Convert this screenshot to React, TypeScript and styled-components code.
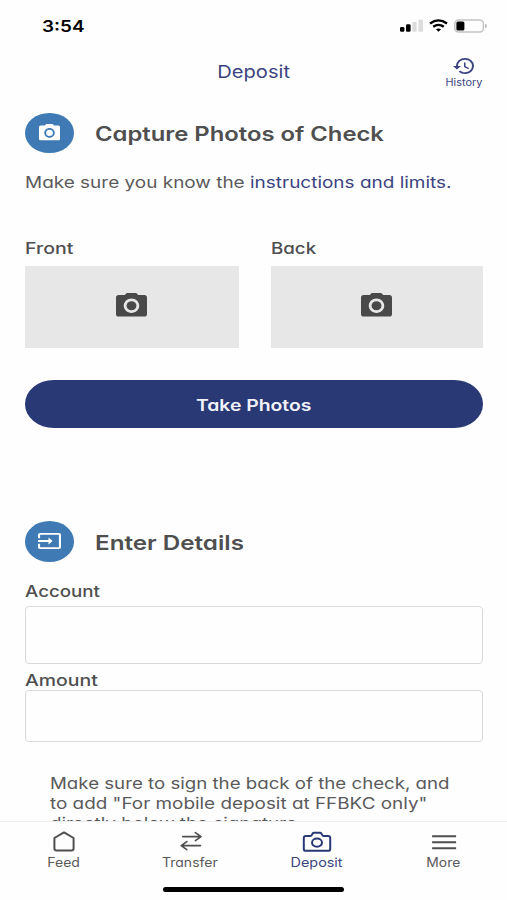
import React from "react";
import styled, { createGlobalStyle } from "styled-components";

const ink = "#4f4f50";
const softInk = "#5a5a5b";
const navy = "#293975";
const softNavy = "#3b4380";
const blue = "#3f7ab5";

const GlobalStyle = createGlobalStyle`
  *, *::before, *::after { box-sizing: border-box; }
  body {
    margin: 0;
    background: #fefefe;
    color: ${ink};
    font-family: Inter, "Open Sans", sans-serif;
    font-feature-settings: "cv11";
  }
`;

const Screen = styled.div`
  display: flex;
  flex-direction: column;
  width: 507px;
  height: 900px;
  overflow: hidden;
`;

const Wide = styled.span<{
  $size: number;
  $weight?: number;
  $stretch?: number;
  $origin?: string;
  $color?: string;
}>`
  display: block;
  width: max-content;
  white-space: nowrap;
  font-size: ${(p) => p.$size}px;
  line-height: 20px;
  font-weight: ${(p) => p.$weight ?? 400};
  color: ${(p) => p.$color ?? "inherit"};
  transform: scaleX(${(p) => p.$stretch ?? 1.182});
  transform-origin: ${(p) => p.$origin ?? "left"} center;
`;

const StatusBar = styled.div`
  flex: none;
  display: flex;
  justify-content: space-between;
  align-items: center;
  height: 51px;
  padding: 0 20px 0 42px;
`;

const StatusIcons = styled.div`
  display: flex;
  align-items: center;
  gap: 6px;
`;

const Header = styled.header`
  flex: none;
  display: grid;
  grid-template-columns: 87px 1fr 87px;
  align-items: center;
  justify-items: center;
  height: 41px;
`;

const HistoryButton = styled.button`
  display: flex;
  flex-direction: column;
  align-items: center;
  padding: 5px 0 0;
  border: 0;
  background: none;
  color: ${softNavy};
  font: inherit;
  font-feature-settings: inherit;
  line-height: 18px;

  ${Wide} {
    line-height: 17px;
  }
`;

const Content = styled.main`
  flex: 1;
  min-height: 0;
  overflow: hidden;
  padding: 20.8px 24px 0 25px;
`;

const SectionHead = styled.div`
  display: flex;
  align-items: center;
  gap: 20.5px;
  height: 40.5px;

  > ${Wide} {
    padding-top: 2px;
  }
`;

const Badge = styled.div`
  display: grid;
  place-items: center;
  width: 49px;
  height: 40.5px;
  padding: 0 1px 1.5px 0;
  border-radius: 50%;
  background: ${blue};
  color: #fff;
`;

const Hint = styled.p`
  margin: 19.2px 0 0;
  color: ${softInk};
`;

const Link = styled.a`
  color: ${softNavy};
`;

const Photos = styled.div`
  display: grid;
  grid-template-columns: 214.4px 212px;
  justify-content: space-between;
  margin-top: 45.5px;
`;

const PhotoBox = styled.div`
  display: grid;
  place-items: center;
  height: 82px;
  margin-top: 8px;
  padding: 0 2px 4px 0;
  background: #e7e7e7;
  color: #49494a;
`;

const PrimaryButton = styled.button`
  display: flex;
  align-items: center;
  justify-content: center;
  width: 458px;
  height: 48.5px;
  margin: 31.8px 0 93.2px;
  padding: 1.5px 0 0;
  border: 0;
  border-radius: 29px / 24.25px;
  background: ${navy};
  color: #f1f2fa;
  font: inherit;
  font-feature-settings: inherit;
`;

const Field = styled.label<{ $top: number; $gap: number }>`
  display: flex;
  flex-direction: column;
  gap: ${(p) => p.$gap}px;
  margin-top: ${(p) => p.$top}px;
`;

const Input = styled.input<{ $height: number }>`
  width: 458px;
  height: ${(p) => p.$height}px;
  border: 1px solid #dadada;
  border-radius: 4px;
  background: transparent;
  outline: none;
`;

const Note = styled.div`
  margin: 31px 0 0 24.5px;
  color: ${softInk};
`;

const TabBar = styled.nav`
  flex: none;
  display: grid;
  grid-template-columns: repeat(4, 126.6px);
  height: 65px;
  padding-left: 0.9px;
  border-top: 1.5px solid #ededed;
`;

const Tab = styled.div<{ $active?: boolean }>`
  display: flex;
  flex-direction: column;
  align-items: center;
  padding-top: 9px;
  color: ${(p) => (p.$active ? navy : ink)};

  ${Wide} {
    margin: -2px 1.4px 0 0;
    color: ${(p) => (p.$active ? softNavy : softInk)};
  }
`;

const HomeArea = styled.div`
  flex: none;
  display: flex;
  justify-content: center;
  height: 14px;
`;

const HomeBar = styled.div`
  width: 181px;
  height: 5.6px;
  margin-top: 0.9px;
  border-radius: 4px;
  background: #000;
`;

const Svg = styled.svg`
  display: block;
  overflow: visible;
`;

const Camera = ({ w, h }: { w: number; h: number }) => (
  <Svg width={w} height={h} viewBox="2 2 20 18" preserveAspectRatio="none" fill="currentColor">
    <ellipse cx="12" cy="11.8" rx="3.2" ry="3.5" />
    <path
      fillRule="evenodd"
      d="M9 2 7.6 3.6H3.6C2.7 3.6 2 4.4 2 5.4v12.8c0 1 .7 1.8 1.6 1.8h16.8c.9 0 1.6-.8 1.6-1.8V5.4c0-1-.7-1.8-1.6-1.8h-4L15 2H9zm3 4.3c2.76 0 5 2.46 5 5.5s-2.24 5.5-5 5.5-5-2.46-5-5.5 2.24-5.5 5-5.5z"
    />
  </Svg>
);

const EnterIcon = () => (
  <Svg width="23" height="16" viewBox="1 3 22 18" preserveAspectRatio="none" fill="currentColor">
    <path d="M21 3.01H3c-1.1 0-2 .9-2 2V9h2V4.99h18v14.03H3V15H1v4.01c0 1.1.9 1.98 2 1.98h18c1.1 0 2-.88 2-1.98v-14c0-1.11-.9-2-2-2zM11 16l4-4-4-4v3H1v2h10v3z" />
  </Svg>
);

const HistoryIcon = () => (
  <Svg width="21" height="16" viewBox="1 3 21 18" preserveAspectRatio="none" fill="currentColor">
    <path d="M13 3a9 9 0 0 0-9 9H1l3.89 3.89.07.14L9 12H6c0-3.87 3.13-7 7-7s7 3.13 7 7-3.13 7-7 7c-1.93 0-3.68-.79-4.94-2.06l-1.42 1.42A8.954 8.954 0 0 0 13 21a9 9 0 0 0 0-18zm-1 5v5l4.28 2.54.72-1.21-3.5-2.08V8H12z" />
  </Svg>
);

const Signal = () => (
  <Svg width="23" height="13" viewBox="0 0 23 13">
    <rect x="0" y="8" width="4.4" height="4.7" rx="1.3" fill="#000" />
    <rect x="6" y="5.2" width="4.6" height="7.5" rx="1.3" fill="#000" />
    <rect x="12.3" y="3" width="4.4" height="9.7" rx="1" fill="#dcdcdc" />
    <rect x="18.4" y="0.4" width="4.6" height="12.3" rx="1" fill="#dcdcdc" />
  </Svg>
);

const Wifi = () => (
  <Svg width="19" height="13" viewBox="0 0 19 13" fill="none" stroke="#000">
    <path d="M1 4.4Q9.5-1.6 18 4.4" strokeWidth="2.4" />
    <path d="M4.2 7.8Q9.5 3.9 14.8 7.8" strokeWidth="2.3" />
    <path d="M6.9 10.3Q9.5 8.5 12.1 10.3L9.5 12.7Z" fill="#000" stroke="none" />
  </Svg>
);

const Battery = () => (
  <Svg width="33" height="14" viewBox="0 0 33 14">
    <rect x="0.8" y="0.9" width="28.6" height="12.2" rx="3.8" fill="none" stroke="#c4c4c4" strokeWidth="1.5" />
    <rect x="2.4" y="2.5" width="8" height="9" rx="1.6" fill="#000" />
    <path d="M31 4.8q2 .6 2 2.2t-2 2.2z" fill="#bdbdbd" />
  </Svg>
);

const TabSvg = styled(Svg).attrs({
  width: 32,
  height: 24,
  viewBox: "0 0 32 24",
  fill: "none",
  stroke: "currentColor",
  strokeWidth: 2,
  strokeLinecap: "round",
  strokeLinejoin: "round",
})``;

const tabs = [
  {
    label: "Feed",
    stretch: 1.12,
    icon: <path d="M6.4 7 16 1.4 25.6 7v10.6q0 1.9-2.2 1.9H8.6q-2.2 0-2.2-1.9Z" />,
  },
  {
    label: "Transfer",
    stretch: 1.12,
    icon: <path strokeWidth="1.7" d="M7.8 5.6h18M20.4 1.6l5.6 4-5.6 4M25.4 14.6h-18M11.8 10.6l-5.6 4 5.6 4" />,
  },
  {
    label: "Deposit",
    stretch: 1.15,
    active: true,
    icon: (
      <>
        <path d="M5 4.9h4.4q1 0 1.5-1l.6-1.2q.5-.9 1.6-.9h5.8q1.1 0 1.6.9l.6 1.2q.5 1 1.5 1H27q2.2 0 2.2 1.9v11.1q0 1.9-2.2 1.9H5q-2.2 0-2.2-1.9V6.8q0-1.9 2.2-1.9Z" />
        <ellipse cx="16" cy="11.6" rx="5" ry="4.1" />
      </>
    ),
  },
  {
    label: "More",
    stretch: 1.11,
    icon: <path strokeLinecap="butt" d="M4.1 5.2h24M4.1 11.2h24M4.1 17.2h24" />,
  },
];

export default function App() {
  return (
    <>
      <GlobalStyle />
      <Screen>
        <StatusBar>
          <Wide $size={16} $weight={600} $color="#000">3:54</Wide>
          <StatusIcons>
            <Signal />
            <Wifi />
            <Battery />
          </StatusIcons>
        </StatusBar>
        <Header>
          <span />
          <Wide $size={17.5} $color={softNavy} $stretch={1.15} $origin="center">Deposit</Wide>
          <HistoryButton>
            <HistoryIcon />
            <Wide $size={10} $stretch={1.09} $origin="center">History</Wide>
          </HistoryButton>
        </Header>
        <Content>
          <SectionHead>
            <Badge><Camera w={21} h={16.3} /></Badge>
            <Wide $size={20} $weight={600} $stretch={1.191}>Capture Photos of Check</Wide>
          </SectionHead>
          <Hint>
            <Wide $size={16} $stretch={1.185}>
              Make sure you know the <Link>instructions and limits.</Link>
            </Wide>
          </Hint>
          <Photos>
            <div>
              <Wide $size={16} $weight={500} $stretch={1.22}>Front</Wide>
              <PhotoBox><Camera w={31} h={23.5} /></PhotoBox>
            </div>
            <div>
              <Wide $size={16} $weight={500} $stretch={1.17}>Back</Wide>
              <PhotoBox><Camera w={31} h={23.5} /></PhotoBox>
            </div>
          </Photos>
          <PrimaryButton>
            <Wide $size={16} $weight={600} $stretch={1.21} $origin="center">Take Photos</Wide>
          </PrimaryButton>
          <SectionHead>
            <Badge><EnterIcon /></Badge>
            <Wide $size={20} $weight={600} $stretch={1.21}>Enter Details</Wide>
          </SectionHead>
          <Field $top={19.3} $gap={5}>
            <Wide $size={16} $weight={500} $stretch={1.17}>Account</Wide>
            <Input $height={58} />
          </Field>
          <Field $top={6} $gap={0}>
            <Wide $size={16} $weight={500} $stretch={1.215}>Amount</Wide>
            <Input $height={52} />
          </Field>
          <Note>
            <Wide $size={16} $stretch={1.167}>Make sure to sign the back of the check, and</Wide>
            <Wide $size={16} $stretch={1.18}>to add "For mobile deposit at FFBKC only"</Wide>
            <Wide $size={16} $stretch={1.175}>directly below the signature.</Wide>
          </Note>
        </Content>
        <TabBar>
          {tabs.map((t) => (
            <Tab key={t.label} $active={t.active}>
              <TabSvg>{t.icon}</TabSvg>
              <Wide $size={12.5} $stretch={t.stretch} $origin="center">{t.label}</Wide>
            </Tab>
          ))}
        </TabBar>
        <HomeArea><HomeBar /></HomeArea>
      </Screen>
    </>
  );
}
